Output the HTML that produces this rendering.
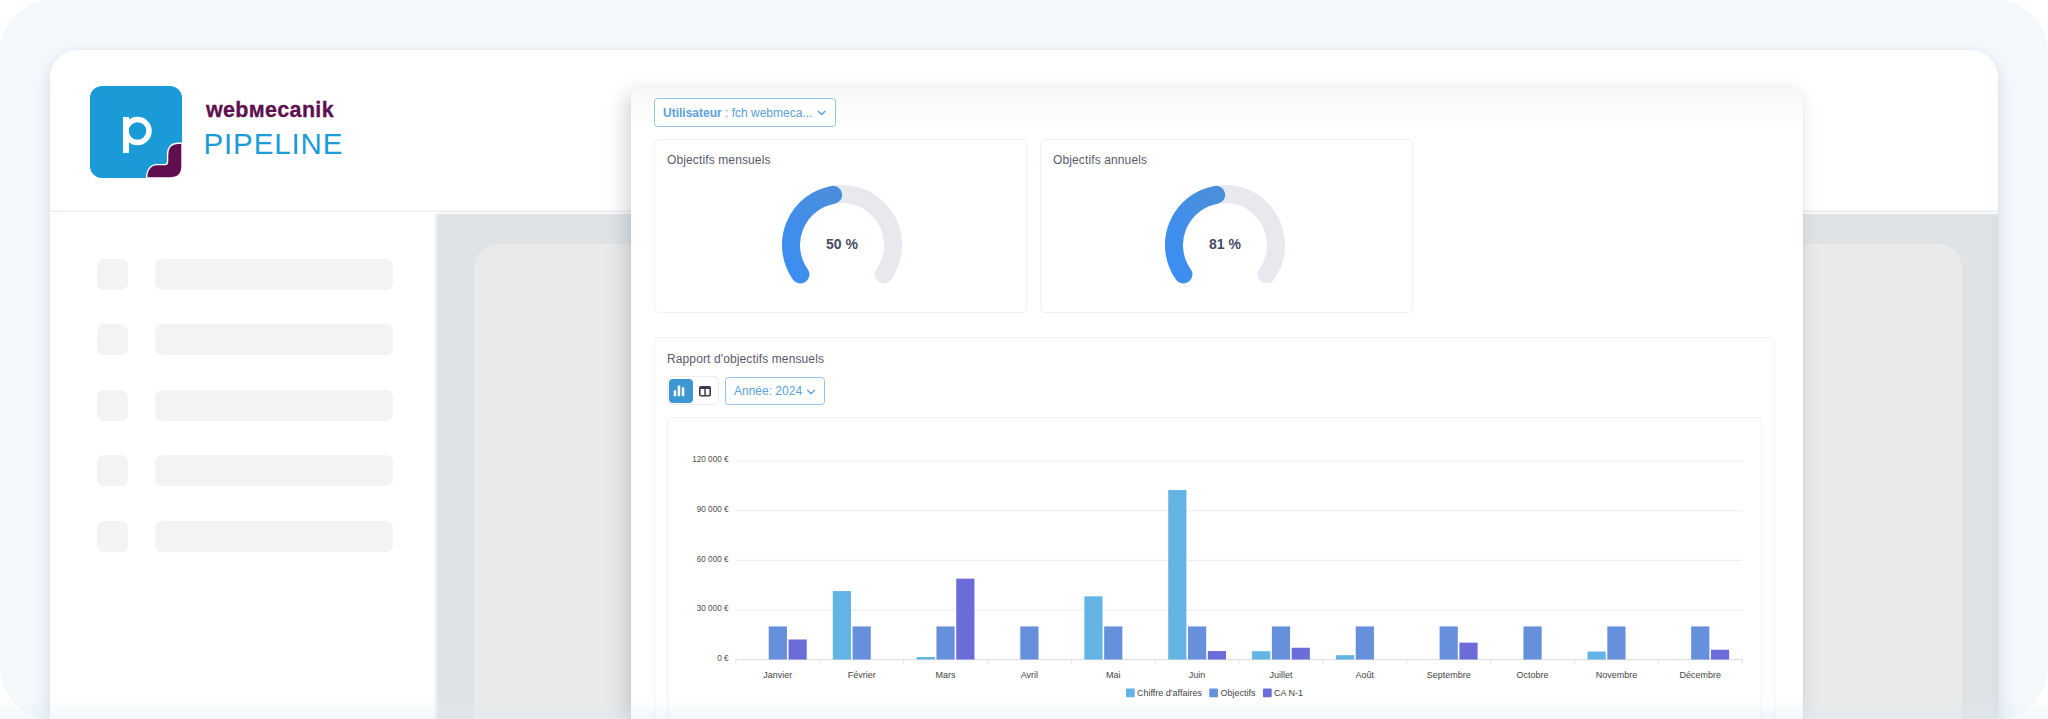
<!DOCTYPE html>
<html><head><meta charset="utf-8">
<style>
*{box-sizing:border-box;margin:0;padding:0}
html,body{width:2048px;height:719px;overflow:hidden;background:#fff;font-family:"Liberation Sans",sans-serif}
.a{position:absolute}
#outer{left:0;top:0;width:2048px;height:719px;border-radius:52px;background:#f4f9fc}
#panel{left:50px;top:50px;width:1948px;height:720px;border-radius:28px 28px 0 0;background:#fff;box-shadow:0 7px 18px rgba(110,130,150,.28)}
#sep{left:50px;top:210px;width:1948px;height:3px;background:linear-gradient(#f6f7f8,#eef0f1,#fafbfb)}
#side{left:50px;top:212px;width:388px;height:520px;background:#fff}
#content{left:433px;top:213.5px;width:1565px;height:520px;background:linear-gradient(to right,rgba(223,227,230,0),#dfe3e6 6px,#dfe3e6 1557px,#d9dde1)}
#inner{left:474px;top:244px;width:1488px;height:520px;border-radius:24px 24px 0 0;background:#eaeaea}
.sq{left:97px;width:31px;height:31px;border-radius:7px;background:#f3f3f3}
.bar{left:155px;width:238px;height:31px;border-radius:7px;background:#f3f3f3}
#card{left:631px;top:86.8px;width:1172px;height:700px;border-radius:12px;background:#fff;box-shadow:-5px 6px 20px rgba(80,90,110,.26),0 0 2px rgba(80,90,110,.08)}
#cardtop{left:631px;top:86.8px;width:1172px;height:42px;border-radius:12px 12px 0 0;background:linear-gradient(#f6f7f8,#f9f9fa 25%,#fff)}
.btn{border:1px solid #98c3e8;border-radius:3.5px;background:#fff;color:#5ba0d6;font-size:12px}
.box{border:1px solid #f0f1f3;border-radius:5px;background:#fff}
.t12{font-size:12px;color:#5a5a6c;white-space:nowrap;letter-spacing:0.12px}
#fade{left:0;top:697px;width:2048px;height:22px;background:linear-gradient(rgba(222,234,242,0),rgba(222,234,242,.18) 50%,rgba(222,234,242,.42))}
</style></head><body>
<div id="outer" class="a"></div>
<div id="panel" class="a"></div>
<div id="sep" class="a"></div>
<div id="side" class="a"></div>
<div id="content" class="a"></div>
<div id="inner" class="a"></div>
<div class="a sq" style="top:259px"></div><div class="a bar" style="top:259px"></div>
<div class="a sq" style="top:324px"></div><div class="a bar" style="top:324px"></div>
<div class="a sq" style="top:390px"></div><div class="a bar" style="top:390px"></div>
<div class="a sq" style="top:455px"></div><div class="a bar" style="top:455px"></div>
<div class="a sq" style="top:521px"></div><div class="a bar" style="top:521px"></div>

<!-- logo -->
<svg class="a" style="left:90px;top:86px" width="92" height="92" viewBox="0 0 92 92">
  <rect x="0" y="0" width="92" height="92" rx="12" fill="#1a9bd7"/>
  <path d="M56.6,92 C56.6,84 60.5,78.6 67,78.6 L75,78.6 Q77.6,78.6 77.6,75.5 L77.6,68.5 C77.6,61.5 81.5,57.2 88,57.2 L92,57.2 L92,80 Q92,92 80,92 Z" fill="#600e50" stroke="#fff" stroke-width="1.4"/>
  <rect x="33" y="31" width="6" height="36" fill="#fff"/>
  <circle cx="47.5" cy="45" r="11.5" fill="none" stroke="#fff" stroke-width="5.5"/>
</svg>
<div class="a" style="left:206px;top:99.5px;font-size:21.5px;font-weight:bold;color:#5d0f4e;line-height:1;letter-spacing:0.33px;-webkit-text-stroke:0.3px #5d0f4e">web&#1084;ecanik</div>
<div class="a" style="left:203.5px;top:128.6px;font-size:29.5px;color:#1b9bd7;letter-spacing:0.87px;line-height:1">PIPELINE</div>

<!-- floating card -->
<div id="card" class="a"></div>
<div id="cardtop" class="a"></div>
<div class="a btn" style="left:654px;top:98px;width:182px;height:29px"></div>
<div class="a" style="left:663px;top:105.7px;font-size:12px;color:#5ba0d6;white-space:nowrap"><b>Utilisateur</b> : fch webmeca...</div>

<div class="a box" style="left:654px;top:139px;width:373px;height:174px"></div>
<div class="a box" style="left:1040px;top:139px;width:373px;height:174px"></div>
<div class="a t12" style="left:667px;top:153px">Objectifs mensuels</div>
<div class="a t12" style="left:1053px;top:153px">Objectifs annuels</div>

<div class="a box" style="left:654px;top:337px;width:1121px;height:400px"></div>
<div class="a t12" style="left:667px;top:352px">Rapport d'objectifs mensuels</div>
<div class="a" style="left:666.5px;top:376.2px;width:52px;height:29px;border:1px solid #ececf0;border-radius:5px;background:#fff"></div>
<div class="a" style="left:669px;top:379.2px;width:23.6px;height:23.8px;border-radius:4px;background:#3d97d3"></div>
<div class="a btn" style="left:725px;top:377px;width:100px;height:28px"></div>
<div class="a" style="left:734px;top:384px;font-size:12px;color:#5ba0d6;white-space:nowrap">Année: 2024</div>
<div class="a box" style="left:667px;top:417px;width:1095px;height:400px"></div>

<svg class="a" style="left:0;top:0" width="2048" height="719" viewBox="0 0 2048 719" id="ov">
<defs><linearGradient id="gb" x1="0" y1="1" x2="1" y2="0"><stop offset="0" stop-color="#3b8ef2"/><stop offset="1" stop-color="#4a8edb"/></linearGradient></defs>
<path d="M800.38,274.47 A51,51 0 1 1 883.62,274.47" fill="none" stroke="#e7e9ef" stroke-width="18" stroke-linecap="round"/>
<path d="M800.38,274.47 A51,51 0 0 1 833.14,194.77" fill="none" stroke="url(#gb)" stroke-width="18" stroke-linecap="round"/>
<text x="842" y="248.6" text-anchor="middle" font-size="14" font-weight="bold" fill="#474b5e">50 %</text>
<path d="M1183.38,274.47 A51,51 0 1 1 1266.62,274.47" fill="none" stroke="#e7e9ef" stroke-width="18" stroke-linecap="round"/>
<path d="M1183.38,274.47 A51,51 0 0 1 1216.14,194.77" fill="none" stroke="url(#gb)" stroke-width="18" stroke-linecap="round"/>
<text x="1225" y="248.6" text-anchor="middle" font-size="14" font-weight="bold" fill="#474b5e">81 %</text>
<text x="728.6" y="660.80" text-anchor="end" font-size="8.2" fill="#505050">0 €</text>
<rect x="735.9" y="609.40" width="1006.3000000000001" height="1" fill="#ebebeb"/>
<text x="728.6" y="611.20" text-anchor="end" font-size="8.2" fill="#505050">30 000 €</text>
<rect x="735.9" y="559.80" width="1006.3000000000001" height="1" fill="#ebebeb"/>
<text x="728.6" y="561.60" text-anchor="end" font-size="8.2" fill="#505050">60 000 €</text>
<rect x="735.9" y="510.20" width="1006.3000000000001" height="1" fill="#ebebeb"/>
<text x="728.6" y="512.00" text-anchor="end" font-size="8.2" fill="#505050">90 000 €</text>
<rect x="735.9" y="460.60" width="1006.3000000000001" height="1" fill="#ebebeb"/>
<text x="728.6" y="462.40" text-anchor="end" font-size="8.2" fill="#505050">120 000 €</text>
<rect x="735.9" y="659.0" width="1006.3000000000001" height="1.2" fill="#e0e0e0"/>
<rect x="735.4" y="659.5" width="1" height="4" fill="#e0e0e0"/>
<rect x="819.2583333333333" y="659.5" width="1" height="4" fill="#e0e0e0"/>
<rect x="903.1166666666667" y="659.5" width="1" height="4" fill="#e0e0e0"/>
<rect x="986.9749999999999" y="659.5" width="1" height="4" fill="#e0e0e0"/>
<rect x="1070.8333333333333" y="659.5" width="1" height="4" fill="#e0e0e0"/>
<rect x="1154.6916666666666" y="659.5" width="1" height="4" fill="#e0e0e0"/>
<rect x="1238.55" y="659.5" width="1" height="4" fill="#e0e0e0"/>
<rect x="1322.4083333333333" y="659.5" width="1" height="4" fill="#e0e0e0"/>
<rect x="1406.2666666666667" y="659.5" width="1" height="4" fill="#e0e0e0"/>
<rect x="1490.125" y="659.5" width="1" height="4" fill="#e0e0e0"/>
<rect x="1573.9833333333333" y="659.5" width="1" height="4" fill="#e0e0e0"/>
<rect x="1657.8416666666667" y="659.5" width="1" height="4" fill="#e0e0e0"/>
<rect x="1741.6999999999998" y="659.5" width="1" height="4" fill="#e0e0e0"/>
<rect x="768.73" y="626.43" width="18.2" height="33.07" fill="#6690dc"/>
<rect x="788.53" y="639.49" width="18.2" height="20.01" fill="#6b6bd9"/>
<text x="777.8" y="678.3" text-anchor="middle" font-size="9" fill="#444">Janvier</text>
<rect x="832.79" y="591.05" width="18.2" height="68.45" fill="#63b4e4"/>
<rect x="852.59" y="626.43" width="18.2" height="33.07" fill="#6690dc"/>
<text x="861.7" y="678.3" text-anchor="middle" font-size="9" fill="#444">Février</text>
<rect x="916.65" y="657.02" width="18.2" height="2.48" fill="#63b4e4"/>
<rect x="936.45" y="626.43" width="18.2" height="33.07" fill="#6690dc"/>
<rect x="956.25" y="578.65" width="18.2" height="80.85" fill="#6b6bd9"/>
<text x="945.5" y="678.3" text-anchor="middle" font-size="9" fill="#444">Mars</text>
<rect x="1020.30" y="626.43" width="18.2" height="33.07" fill="#6690dc"/>
<text x="1029.4" y="678.3" text-anchor="middle" font-size="9" fill="#444">Avril</text>
<rect x="1084.36" y="596.34" width="18.2" height="63.16" fill="#63b4e4"/>
<rect x="1104.16" y="626.43" width="18.2" height="33.07" fill="#6690dc"/>
<text x="1113.3" y="678.3" text-anchor="middle" font-size="9" fill="#444">Mai</text>
<rect x="1168.22" y="490.03" width="18.2" height="169.47" fill="#63b4e4"/>
<rect x="1188.02" y="626.43" width="18.2" height="33.07" fill="#6690dc"/>
<rect x="1207.82" y="651.07" width="18.2" height="8.43" fill="#6b6bd9"/>
<text x="1197.1" y="678.3" text-anchor="middle" font-size="9" fill="#444">Juin</text>
<rect x="1252.08" y="651.23" width="18.2" height="8.27" fill="#63b4e4"/>
<rect x="1271.88" y="626.43" width="18.2" height="33.07" fill="#6690dc"/>
<rect x="1291.68" y="647.76" width="18.2" height="11.74" fill="#6b6bd9"/>
<text x="1281.0" y="678.3" text-anchor="middle" font-size="9" fill="#444">Juillet</text>
<rect x="1335.94" y="655.20" width="18.2" height="4.30" fill="#63b4e4"/>
<rect x="1355.74" y="626.43" width="18.2" height="33.07" fill="#6690dc"/>
<text x="1364.8" y="678.3" text-anchor="middle" font-size="9" fill="#444">Août</text>
<rect x="1439.60" y="626.43" width="18.2" height="33.07" fill="#6690dc"/>
<rect x="1459.40" y="642.64" width="18.2" height="16.86" fill="#6b6bd9"/>
<text x="1448.7" y="678.3" text-anchor="middle" font-size="9" fill="#444">Septembre</text>
<rect x="1523.45" y="626.43" width="18.2" height="33.07" fill="#6690dc"/>
<text x="1532.6" y="678.3" text-anchor="middle" font-size="9" fill="#444">Octobre</text>
<rect x="1587.51" y="651.56" width="18.2" height="7.94" fill="#63b4e4"/>
<rect x="1607.31" y="626.43" width="18.2" height="33.07" fill="#6690dc"/>
<text x="1616.4" y="678.3" text-anchor="middle" font-size="9" fill="#444">Novembre</text>
<rect x="1691.17" y="626.43" width="18.2" height="33.07" fill="#6690dc"/>
<rect x="1710.97" y="649.75" width="18.2" height="9.75" fill="#6b6bd9"/>
<text x="1700.3" y="678.3" text-anchor="middle" font-size="9" fill="#444">Décembre</text>
<rect x="1126" y="688.6" width="8.7" height="8.7" rx="1" fill="#63b4e4"/>
<text x="1137" y="696" font-size="9" fill="#444">Chiffre d'affaires</text>
<rect x="1209.2" y="688.6" width="8.7" height="8.7" rx="1" fill="#6690dc"/>
<text x="1220.5" y="696" font-size="9" fill="#444">Objectifs</text>
<rect x="1263" y="688.6" width="8.7" height="8.7" rx="1" fill="#6b6bd9"/>
<text x="1274" y="696" font-size="9" fill="#444">CA N-1</text>
<rect x="673.7" y="390.3" width="2.5" height="5.90" rx="0.6" fill="#fff"/>
<rect x="677.7" y="385.6" width="2.5" height="10.60" rx="0.6" fill="#fff"/>
<rect x="681.8" y="387.3" width="2.5" height="8.90" rx="0.6" fill="#fff"/>
<rect x="699.8" y="386.8" width="10.4" height="9" rx="1.2" fill="none" stroke="#3b3b4b" stroke-width="1.6"/>
<rect x="699.8" y="386.8" width="10.4" height="2.2" fill="#3b3b4b"/>
<rect x="704.3" y="386.8" width="1.5" height="9" fill="#3b3b4b"/>
<path d="M818.2,111.2 L821.6,114.6 L825,111.2" fill="none" stroke="#5ba0d6" stroke-width="1.4" stroke-linecap="round" stroke-linejoin="round"/>
<path d="M807.5,390.3 L811,393.8 L814.5,390.3" fill="none" stroke="#5ba0d6" stroke-width="1.3" stroke-linecap="round" stroke-linejoin="round"/>
</svg>
<div id="fade" class="a"></div>
</body></html>
